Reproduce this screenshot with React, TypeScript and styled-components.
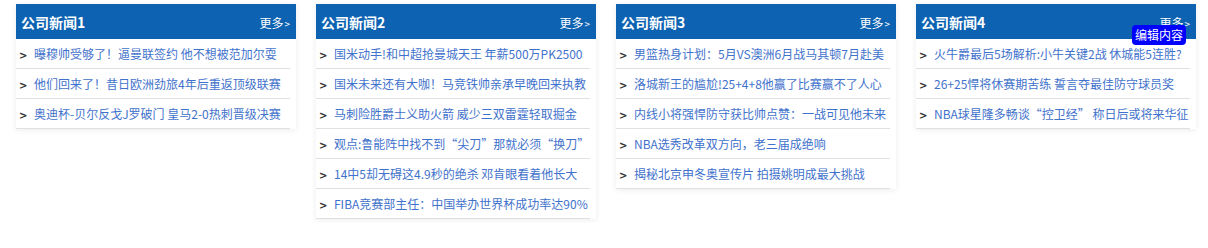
import React from 'react';
import styled, { createGlobalStyle } from 'styled-components';

const GlobalStyle = createGlobalStyle`
  body {
    margin: 0;
    background: #ffffff;
    font-family: "Microsoft YaHei", "Noto Sans CJK SC", "Liberation Sans", sans-serif;
  }
`;

const Page = styled.div`
  display: flex;
  align-items: flex-start;
  gap: 20px;
  padding: 4px 16px;
`;

const Card = styled.div`
  position: relative;
  flex: none;
  width: 280px;
  background: #ffffff;
  box-shadow: 0 1px 6px rgba(0, 0, 0, 0.08);
`;

const CardHeader = styled.div`
  height: 35px;
  display: flex;
  align-items: center;
  justify-content: space-between;
  padding: 0 6px 0 5px;
  background: #0d62b2;
  color: #ffffff;
`;

const Title = styled.span`
  font-size: 14px;
  font-weight: bold;
`;

const More = styled.a`
  font-size: 12px;
  color: #ffffff;
  text-decoration: none;
  padding-top: 1px;

  small {
    font-size: 10px;
    margin-left: 1px;
  }
`;

const List = styled.ul`
  list-style: none;
  margin: 0;
  padding: 0 6px 0 0;
`;

const Item = styled.li`
  height: 29px;
  display: flex;
  align-items: center;
  border-bottom: 1px solid #e1e1e1;
  font-size: 12px;
  white-space: nowrap;
  overflow: hidden;
`;

const Arrow = styled.span`
  width: 15px;
  flex: none;
  padding-left: 3px;
  padding-top: 3px;
  color: #333333;
  font-size: 10px;
  font-weight: bold;
  font-family: "DejaVu Sans", sans-serif;
`;

const Link = styled.a`
  color: #3f72cc;
  text-decoration: none;
  overflow: hidden;
`;

const EditBadge = styled.span`
  position: absolute;
  top: 21px;
  right: 10px;
  padding: 1px 3px;
  border-radius: 4px;
  background: #0000ff;
  color: #ffffff;
  font-size: 12px;
  line-height: 18px;
`;

const cards = [
  {
    title: '公司新闻1',
    items: [
      '曝穆帅受够了！逼曼联签约 他不想被范加尔耍',
      '他们回来了！昔日欧洲劲旅4年后重返顶级联赛',
      '奥迪杯-贝尔反戈J罗破门 皇马2-0热刺晋级决赛',
    ],
  },
  {
    title: '公司新闻2',
    items: [
      '国米动手!和中超抢曼城天王 年薪500万PK2500',
      '国米未来还有大咖！马竞铁帅亲承早晚回来执教',
      '马刺险胜爵士义助火箭 威少三双雷霆轻取掘金',
      '观点:鲁能阵中找不到“尖刀”那就必须“换刀”',
      '14中5却无碍这4.9秒的绝杀 邓肯眼看着他长大',
      'FIBA竞赛部主任：中国举办世界杯成功率达90%',
    ],
  },
  {
    title: '公司新闻3',
    items: [
      '男篮热身计划：5月VS澳洲6月战马其顿7月赴美',
      '洛城新王的尴尬!25+4+8他赢了比赛赢不了人心',
      '内线小将强悍防守获比帅点赞：一战可见他未来',
      'NBA选秀改革双方向，老三届成绝响',
      '揭秘北京申冬奥宣传片 拍摄姚明成最大挑战',
    ],
  },
  {
    title: '公司新闻4',
    items: [
      '火牛爵最后5场解析:小牛关键2战 休城能5连胜?',
      '26+25悍将休赛期苦练 誓言夺最佳防守球员奖',
      'NBA球星隆多畅谈“控卫经” 称日后或将来华征',
    ],
    editable: true,
  },
];

export default function App() {
  return (
    <>
      <GlobalStyle />
      <Page>
        {cards.map((card) => (
          <Card key={card.title}>
            <CardHeader>
              <Title>{card.title}</Title>
              <More href="#">
                更多<small>&gt;</small>
              </More>
            </CardHeader>
            <List>
              {card.items.map((text) => (
                <Item key={text}>
                  <Arrow>&gt;</Arrow>
                  <Link href="#">{text}</Link>
                </Item>
              ))}
            </List>
            {card.editable && <EditBadge>编辑内容</EditBadge>}
          </Card>
        ))}
      </Page>
    </>
  );
}
